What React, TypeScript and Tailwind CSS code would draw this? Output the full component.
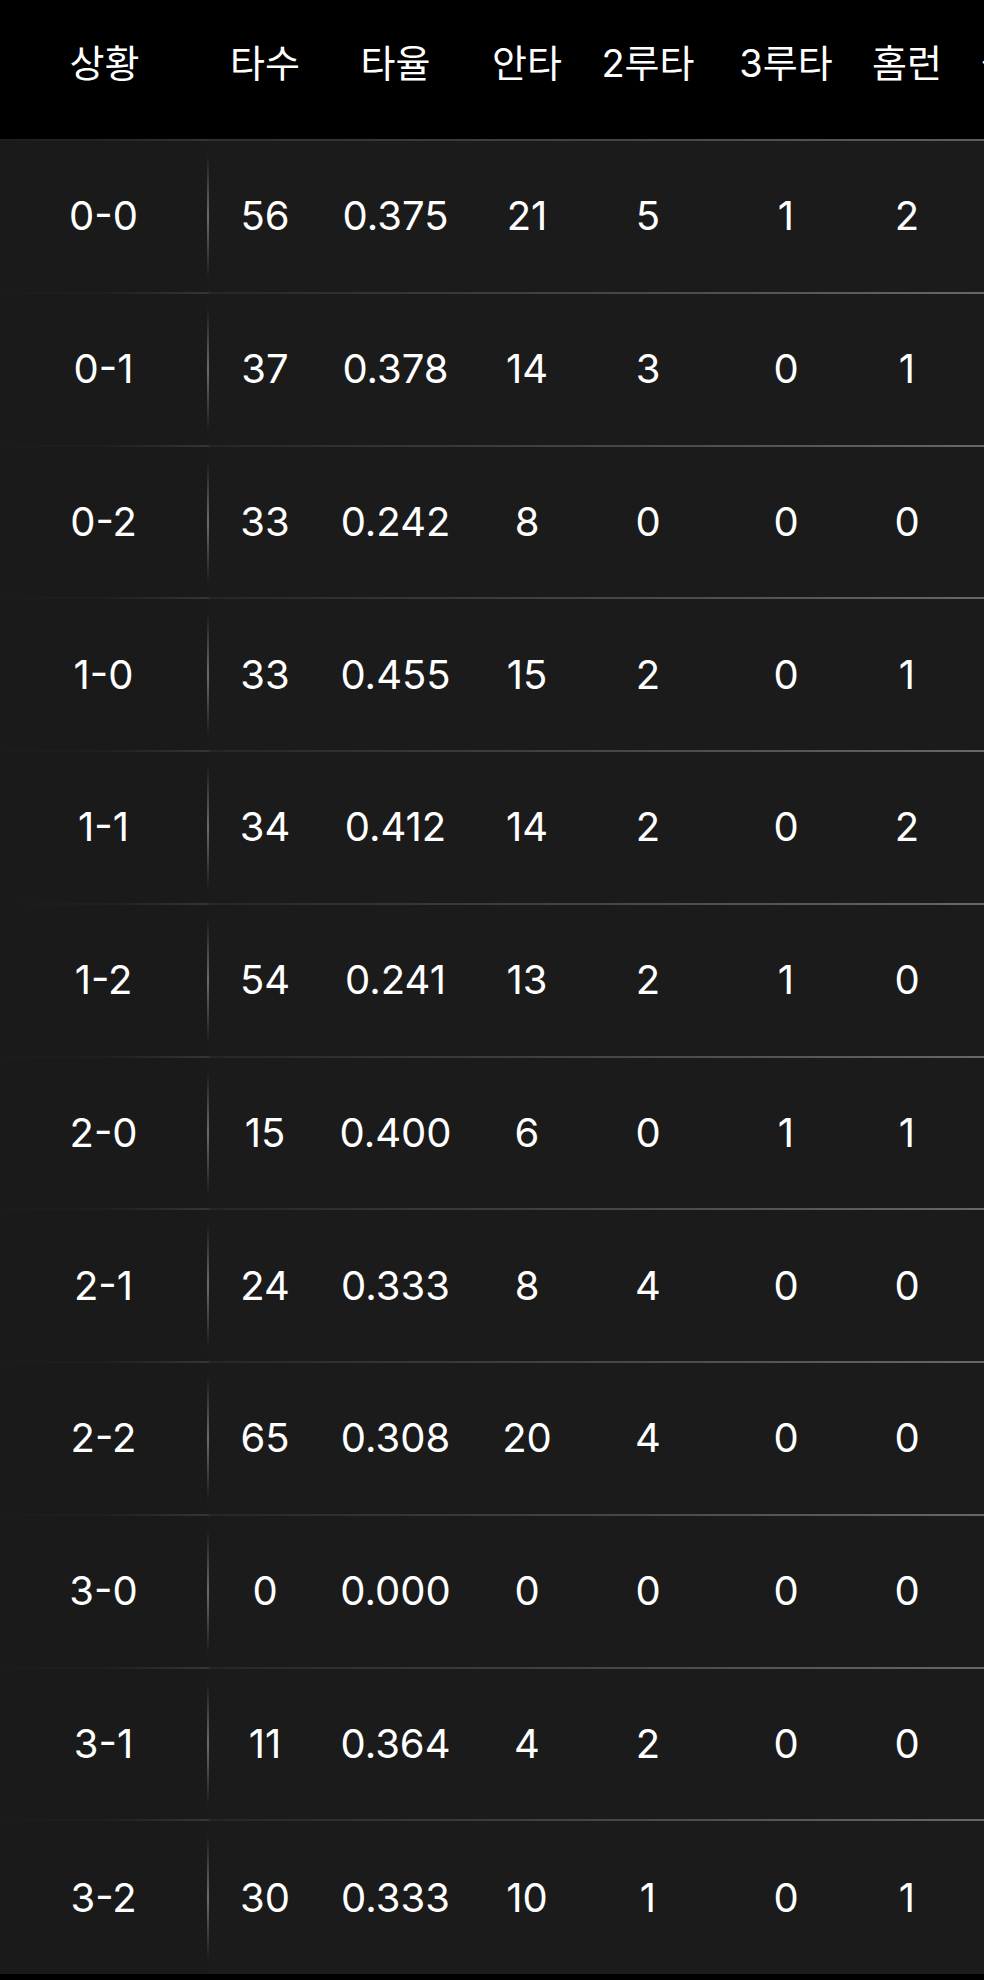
type Row = {
  count: string;
  ab: number;
  avg: string;
  hits: number;
  doubles: number;
  triples: number;
  hr: number;
};

const ROWS: Row[] = [
  { count: "0-0", ab: 56, avg: "0.375", hits: 21, doubles: 5, triples: 1, hr: 2 },
  { count: "0-1", ab: 37, avg: "0.378", hits: 14, doubles: 3, triples: 0, hr: 1 },
  { count: "0-2", ab: 33, avg: "0.242", hits: 8, doubles: 0, triples: 0, hr: 0 },
  { count: "1-0", ab: 33, avg: "0.455", hits: 15, doubles: 2, triples: 0, hr: 1 },
  { count: "1-1", ab: 34, avg: "0.412", hits: 14, doubles: 2, triples: 0, hr: 2 },
  { count: "1-2", ab: 54, avg: "0.241", hits: 13, doubles: 2, triples: 1, hr: 0 },
  { count: "2-0", ab: 15, avg: "0.400", hits: 6, doubles: 0, triples: 1, hr: 1 },
  { count: "2-1", ab: 24, avg: "0.333", hits: 8, doubles: 4, triples: 0, hr: 0 },
  { count: "2-2", ab: 65, avg: "0.308", hits: 20, doubles: 4, triples: 0, hr: 0 },
  { count: "3-0", ab: 0, avg: "0.000", hits: 0, doubles: 0, triples: 0, hr: 0 },
  { count: "3-1", ab: 11, avg: "0.364", hits: 4, doubles: 2, triples: 0, hr: 0 },
  { count: "3-2", ab: 30, avg: "0.333", hits: 10, doubles: 1, triples: 0, hr: 1 },
];

// widths of the stat columns after the first one
const COLS = ["w-[112px]", "w-[149px]", "w-[114px]", "w-[128px]", "w-[148px]", "w-[94px]", "w-[124px]"];
const HEADERS = ["타수", "타율", "안타", "2루타", "3루타", "홈런", "볼넷"];

const Divider = ({ header }: { header?: boolean }) => (
  <div className="flex h-[2px] shrink-0">
    <div
      className={
        header
          ? "w-[209px] bg-gradient-to-r from-[#1e1e1e] via-[#242424] to-[#343434]"
          : "w-[209px] bg-gradient-to-r from-transparent via-[#1f1f1f] to-[#353535]"
      }
    />
    <div
      className={
        header
          ? "w-[775px] bg-gradient-to-r from-[#2e2e2e] via-[#434343] to-[#5e5e5e]"
          : "w-[775px] bg-gradient-to-r from-[#262626] via-[#454545] to-[#686868]"
      }
    />
  </div>
);

const App = () => {
  return (
    <div className="w-[984px] h-[1980px] overflow-hidden bg-black text-white font-['Inter','Noto_Sans_CJK_KR',sans-serif]">
      <div className="flex h-[139px] items-center pb-3 text-[38px] whitespace-nowrap">
        <div className="w-[209px] shrink-0 text-center">상황</div>
        {HEADERS.map((h, i) => (
          <div key={h} className={`${COLS[i]} shrink-0 text-center`}>
            {h}
          </div>
        ))}
      </div>
      <Divider header />

      <div className="flex flex-col bg-[#1b1b1b]">
        {ROWS.map((r, idx) => {
          const values = [r.ab, r.avg, r.hits, r.doubles, r.triples, r.hr];
          return (
            <div key={r.count} className="flex flex-col h-[152.75px]">
              <div className="flex flex-1 items-center text-[40px] whitespace-nowrap">
                <div className="w-[207px] shrink-0 text-center bg-[#1a1a1a] self-stretch flex items-center justify-center">
                  {r.count}
                </div>
                <div className="w-[2px] shrink-0 self-stretch my-[14px] bg-gradient-to-b from-transparent via-[#6c6c6c] to-transparent" />
                {values.map((v, i) => (
                  <div key={i} className={`${COLS[i]} shrink-0 text-center`}>
                    {v}
                  </div>
                ))}
              </div>
              {idx < ROWS.length - 1 && <Divider />}
            </div>
          );
        })}
      </div>
    </div>
  );
};

export default App;
